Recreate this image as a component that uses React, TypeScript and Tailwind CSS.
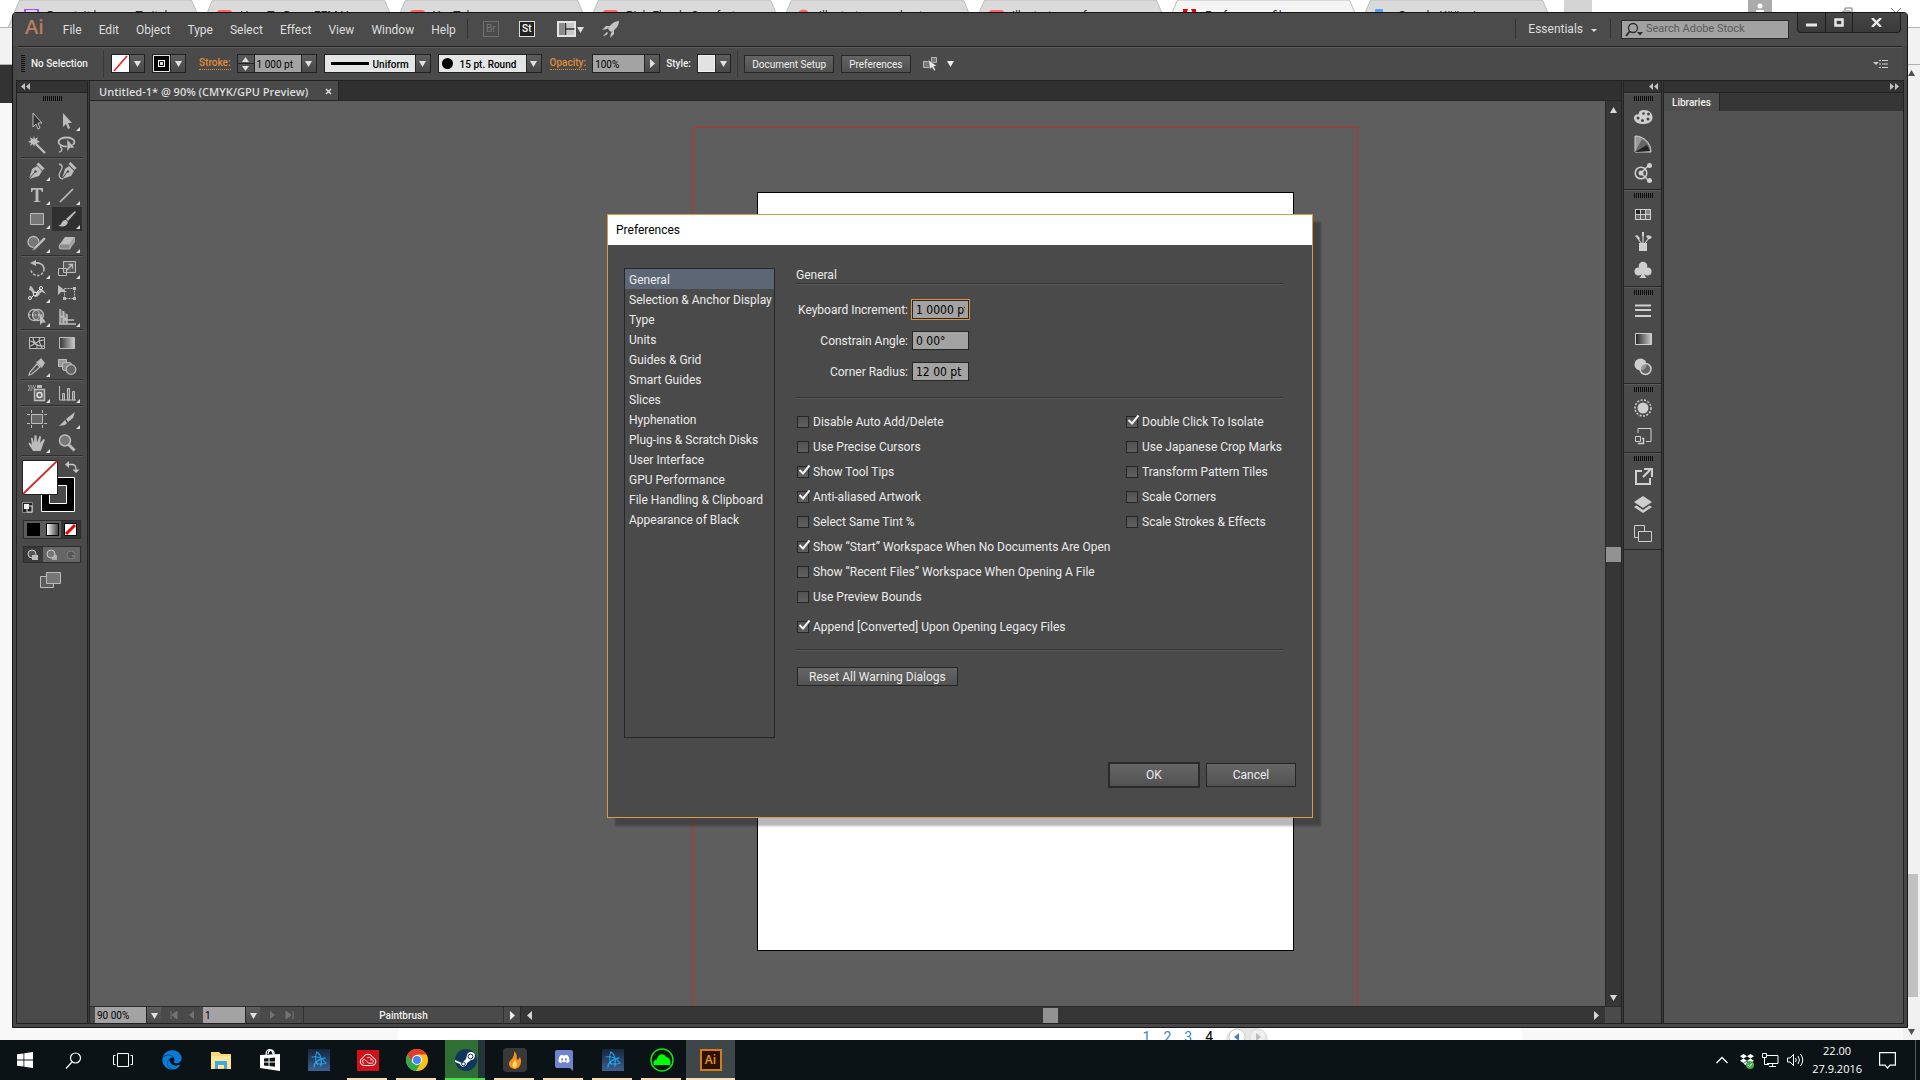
import { useState } from "react";
import type { ReactNode } from "react";
import clsx from "clsx";
import { FaDiscord, FaDropbox, FaEdge } from "react-icons/fa";

const menus = ["File", "Edit", "Object", "Type", "Select", "Effect", "View", "Window", "Help"];

const sections = [
  "General",
  "Selection & Anchor Display",
  "Type",
  "Units",
  "Guides & Grid",
  "Smart Guides",
  "Slices",
  "Hyphenation",
  "Plug-ins & Scratch Disks",
  "User Interface",
  "GPU Performance",
  "File Handling & Clipboard",
  "Appearance of Black",
];

const leftOptions = [
  { label: "Disable Auto Add/Delete", on: false },
  { label: "Use Precise Cursors", on: false },
  { label: "Show Tool Tips", on: true },
  { label: "Anti-aliased Artwork", on: true },
  { label: "Select Same Tint %", on: false },
  { label: "Show “Start” Workspace When No Documents Are Open", on: true },
  { label: "Show “Recent Files” Workspace When Opening A File", on: false },
  { label: "Use Preview Bounds", on: false },
];

const rightOptions = [
  { label: "Double Click To Isolate", on: true },
  { label: "Use Japanese Crop Marks", on: false },
  { label: "Transform Pattern Tiles", on: false },
  { label: "Scale Corners", on: false },
  { label: "Scale Strokes & Effects", on: false },
];

const browserTabs = [
  { title: "Dvantvit.bonus - Twitch", color: "text-purple-500", kind: "twitch" },
  { title: "How To Draw FEMALE Sk", color: "text-red-400", kind: "play" },
  { title: "YouTube", color: "text-red-400", kind: "play" },
  { title: "Rich Florals Comfortabl", color: "text-red-400", kind: "play" },
  { title: "illustrator smudge tool set", color: "text-red-400", kind: "ring" },
  { title: "illustrator preference for", color: "text-red-400", kind: "play" },
  { title: "Preferences files ......", color: "text-red-600", kind: "adobe" },
  { title: "Google-Käännin", color: "text-blue-400", kind: "doc" },
];

/* ---------- small pieces ---------- */

function Svg({ w = 20, h = 20, children, className }: { w?: number; h?: number; children: ReactNode; className?: string }) {
  return (
    <svg width={w} height={h} viewBox={`0 0 ${w} ${h}`} fill="none" className={clsx("shrink-0", className)} aria-hidden>
      {children}
    </svg>
  );
}

function Triangle({ dir = "down", className }: { dir?: "down" | "up" | "left" | "right"; className?: string }) {
  const d = { down: "M1 2h7l-3.500 6z", up: "M1 7h7L4.500 1z", left: "M7 0v9L2 4.500z", right: "M2 0v9l5-4.500z" }[dir];
  return (
    <Svg w={9} h={9} className={className}>
      <path d={d} fill="currentColor" />
    </Svg>
  );
}

function Grip() {
  return (
    <Svg w={20} h={5}>
      <path d="M1.500 0v5M3.500 0v5M5.500 0v5M7.500 0v5M9.500 0v5M11.500 0v5M13.500 0v5M15.500 0v5M17.500 0v5M19.500 0v5" stroke="#0c0c0c" />
    </Svg>
  );
}

function Collapse({ right }: { right?: boolean }) {
  return (
    <Svg w={9} h={7}>
      <path
        d={right ? "M0 0v7l4-3.500zM5 0v7l4-3.500z" : "M4 0v7L0 3.500zM9 0v7L5 3.500z"}
        fill="#c4c4c4"
      />
    </Svg>
  );
}

function Divider() {
  return <div className="mx-1 h-[2px] border-t border-[#303030] bg-[#5a5a5a]" />;
}

function ArrowBox({ dir = "down" }: { dir?: "down" | "right" }) {
  return (
    <span className="pointer-events-none flex w-[15px] shrink-0 items-center justify-center border-l border-[#262626] bg-gradient-to-b from-[#5e5e5e] to-[#494949] text-[#e2e2e2]">
      <Triangle dir={dir} />
    </span>
  );
}

function Swatch({ label, children }: { label: string; children: ReactNode }) {
  return (
    <button aria-label={label} className="flex h-[19px] border border-[#222]">
      <span className="flex w-[17px] self-stretch overflow-hidden">{children}</span>
      <ArrowBox />
    </button>
  );
}

function BarButton({ children }: { children: ReactNode }) {
  return (
    <button className="h-[18px] border border-[#262626] bg-gradient-to-b from-[#646464] to-[#505050] px-[7px] leading-[18px] text-[#efefef]">
      {children}
    </button>
  );
}

/* ---------- browser behind the window ---------- */

function BrowserBackdrop() {
  return (
    <div className="absolute inset-0 flex flex-col bg-[#f8f8f8]" aria-hidden>
      <div className="flex h-7 shrink-0 items-start overflow-hidden border-b border-[#b4b4b4] bg-white pl-2">
        {browserTabs.map((t) => (
          <div key={t.title} className="relative h-7 w-[193px] shrink-0">
            <Svg w={197} h={28} className="absolute inset-0">
              <path
                d="M0 28L11 1q1-1 2-1h169q1 0 2 1l11 27"
                fill={t.kind === "adobe" ? "#f4f4f4" : "#dadada"}
                stroke="#bdbdbd"
              />
            </Svg>
            <div className="relative flex items-center gap-2 pt-2 pr-3 pl-4 text-xs leading-4 text-[#333]">
              <Svg w={15} h={15} className={t.color}>
                {t.kind === "play" && <rect y="1" width="15" height="11" rx="3" fill="currentColor" />}
                {t.kind === "ring" && <circle cx="7.500" cy="7" r="5" stroke="currentColor" strokeWidth="3" />}
                {t.kind === "twitch" && <path d="M1 0h13v10H1z" stroke="currentColor" strokeWidth="2" />}
                {t.kind === "adobe" && <path d="M1 0h5L1 13zM9 0h5v13z" fill="currentColor" />}
                {t.kind === "doc" && <rect width="8" height="13" rx="1" fill="currentColor" />}
              </Svg>
              <span className="flex-1 truncate">{t.title}</span>
              <Svg w={9} h={9}>
                <path d="M1 1l7 7M8 1L1 8" stroke="#666" />
              </Svg>
            </div>
          </div>
        ))}
        <div className="ml-3 h-4 w-7 shrink-0 rounded-b bg-[#d4d4d4]" />
        <div className="flex-1" />
        <Svg w={24} h={16} className="mr-[70px]">
          <path d="M0 0h24v16H0z" fill="#aaa" />
          <circle cx="12" cy="6" r="2.500" fill="#fff" />
          <path d="M8 14v-4h8v4z" fill="#fff" />
        </Svg>
        <Svg w={12} h={16} className="mr-9">
          <path d="M3 10V8h7v7M1 11h7v5H1z" stroke="#777" />
        </Svg>
        <Svg w={12} h={16} className="mr-[18px]">
          <path d="M1 8l10 10M11 8L1 18" stroke="#777" />
        </Svg>
      </div>
      <div className="h-[37px] shrink-0 border-b border-[#b0b0b0] bg-[#f2f2f2]" />
      <div className="relative flex flex-1">
        <div className="h-[38px] w-16 bg-[#333]" />
        <div className="flex-1" />
        <div className="flex w-[17px] flex-col items-end bg-[#f1f1f1] text-[#505050]">
          <Triangle dir="up" className="mt-1 mr-1" />
          <div className="flex-[80]" />
          <div className="mr-[2px] h-[123px] w-[15px] bg-[#c1c1c1]" />
          <div className="flex-[3]" />
          <Triangle className="mr-1 mb-1" />
        </div>
        <div className="absolute inset-x-[398px] bottom-0 flex h-3 items-start justify-end gap-[13px] overflow-hidden bg-white pr-[254px] text-sm leading-[18px] text-[#3c86c8]">
          <span>1</span>
          <span>2</span>
          <span>3</span>
          <span className="text-black">4</span>
          <Svg w={42} h={24} className="rounded-full bg-[#e6e6e6]">
            <circle cx="11" cy="9" r="8" fill="#fff" stroke="#ccc" />
            <circle cx="32" cy="9" r="8" fill="#eee" stroke="#ddd" />
            <path d="M13 5v8L8 9z" fill="#3c86c8" />
            <path d="M30 5v8l5-4z" fill="#bbb" />
          </Svg>
        </div>
      </div>
    </div>
  );
}

/* ---------- menu bar & control bar ---------- */

function MenuBar() {
  return (
    <header className="flex h-[33px] shrink-0 items-start bg-[#4b4b4b] pl-3 text-xs text-[#dedede]">
      <span className="mt-1 font-['Open_Sans',sans-serif] text-xl leading-5 font-semibold text-[#b67f5e]">Ai</span>
      <nav className="mt-2 ml-[19px] flex gap-[17px] leading-[18px]">
        {menus.map((m) => (
          <button key={m}>{m}</button>
        ))}
      </nav>
      <span className="mt-[6px] ml-[11px] h-5 w-px bg-[#333]" />
      <button className="mt-2 ml-[15px] size-4 border border-[#6e6e6e] text-center text-[10px] leading-3 text-[#757575]">Br</button>
      <button className="mt-2 ml-5 size-4 border border-[#ddd] bg-[#222] text-center text-[10px] leading-3 font-medium text-white">St</button>
      <button aria-label="Arrange documents" className="mt-2 ml-[22px] flex items-center">
        <Svg w={19} h={16}>
          <path d="M1 1h17v14H1z" fill="#c8c8c8" stroke="#e4e4e4" strokeWidth="2" />
          <path d="M8.500 2v12M8.500 8h9" stroke="#333" strokeWidth="1.500" />
          <path d="M2 2h5.500v12H2z" fill="#8a8a8a" />
        </Svg>
        <Triangle />
      </button>
      <button aria-label="GPU performance" className="mt-[7px] ml-4">
        <Svg w={19} h={19}>
          <path d="M18 1c-5 0-9 4-11 8l3 3c4-2 8-6 8-11zM6 9L1 10l4-4h4zM10 13l-1 5 4-4v-4zM6 12l-4 4c2 0 4-1 5-3z" fill="#c4c4c4" />
        </Svg>
      </button>
      <div className="flex-1" />
      <span className="mt-[6px] h-5 w-px bg-[#333]" />
      <button className="mt-[7px] ml-3 flex items-center gap-2 leading-[18px]">
        Essentials
        <Svg w={7} h={9}>
          <path d="M0 4h6L3 7z" fill="#ddd" />
        </Svg>
      </button>
      <span className="mt-[6px] ml-3 h-5 w-px bg-[#333]" />
      <label className="mt-[7px] ml-[10px] flex h-[19px] w-[168px] items-center border border-[#2a2a2a] bg-[#a2a2a2] pl-[3px]">
        <Svg w={19} h={15}>
          <circle cx="8" cy="6" r="4.500" stroke="#2c2c2c" strokeWidth="1.300" />
          <path d="M5 9l-4 5" stroke="#2c2c2c" strokeWidth="2" />
          <path d="M12 10h6l-3 3.500z" fill="#2c2c2c" />
        </Svg>
        <input
          aria-label="Search Adobe Stock"
          placeholder="Search Adobe Stock"
          className="ml-[2px] w-0 flex-1 bg-transparent text-[11px] outline-none placeholder:text-[#5a5a5a]"
        />
      </label>
      <div className="mr-[6px] ml-2 flex h-5 divide-x divide-[#1e1e1e] rounded-b border border-t-0 border-[#1e1e1e] bg-gradient-to-b from-[#454545] to-[#3a3a3a]">
        <button aria-label="Minimize" className="flex w-7 items-center justify-center">
          <Svg w={11} h={9}>
            <path d="M0 7h11" stroke="#e8e8e8" strokeWidth="3" />
          </Svg>
        </button>
        <button aria-label="Maximize" className="flex w-[27px] items-center justify-center">
          <Svg w={10} h={9}>
            <path d="M1.500 1.500h7v6h-7z" stroke="#e8e8e8" strokeWidth="2.500" />
          </Svg>
        </button>
        <button aria-label="Close" className="flex w-[47px] items-center justify-center">
          <Svg w={11} h={9}>
            <path d="M1 0l9 9M10 0L1 9" stroke="#e8e8e8" strokeWidth="2.400" />
          </Svg>
        </button>
      </div>
    </header>
  );
}

function ControlBar() {
  return (
    <div className="flex h-[35px] shrink-0 items-center border-t border-b border-[#222] bg-[#4a4a4a] pl-1 text-[10px] text-[#efefef] inset-shadow-[0_1px_0_#5c5c5c]">
      <Svg w={4} h={19}>
        <path d="M0 1.500h4M0 3.500h4M0 5.500h4M0 7.500h4M0 9.500h4M0 11.500h4M0 13.500h4M0 15.500h4M0 17.500h4" stroke="#111" />
      </Svg>
      <span className="ml-[6px] w-[72px] font-medium">No Selection</span>
      <span className="mr-[7px] h-7 w-px bg-[#393939]" />
      <div className="flex gap-[7px]">
        <Swatch label="Fill">
          <Svg w={17} h={17}>
            <path d="M0 0h17v17H0z" fill="#fff" />
            <path d="M2 16L15 1" stroke="#d22" strokeWidth="1.600" />
          </Svg>
        </Swatch>
        <Swatch label="Stroke color">
          <Svg w={17} h={17}>
            <path d="M.5.5h16v16H.5z" fill="#000" stroke="#e8e8e8" />
            <path d="M5 5h7v7H5z" fill="#fff" />
            <path d="M6.500 6.500h4v4h-4z" fill="#ddd" stroke="#000" />
          </Svg>
        </Swatch>
      </div>
      <a href="#stroke" className="ml-[13px] border-b border-dotted border-[#e08a3a] leading-3 font-medium text-[#e08a3a]">
        Stroke:
      </a>
      <div className="ml-[6px] flex h-[19px] border border-[#222]">
        <div className="flex w-4 flex-col text-[#ddd]">
          <button aria-label="Increase stroke" className="flex flex-1 items-center justify-center border-b border-[#222] bg-[#585858]">
            <Svg w={7} h={5}><path d="M0 5h7L3.500 0z" fill="currentColor" /></Svg>
          </button>
          <button aria-label="Decrease stroke" className="flex flex-1 items-center justify-center bg-[#505050]">
            <Svg w={7} h={5}><path d="M0 0h7L3.500 5z" fill="currentColor" /></Svg>
          </button>
        </div>
        <input aria-label="Stroke weight" defaultValue="1 000 pt" className="w-[47px] border-l border-[#222] bg-[#a3a3a3] px-[2px] pt-px text-[10px] text-black outline-none" />
        <ArrowBox />
      </div>
      <div className="ml-[7px] flex h-[19px] border border-[#222]">
        <label className="flex w-[90px] items-center bg-[#e4e6e6] pl-[6px] text-black">
          <span className="h-[3px] w-[38px] shrink-0 bg-black" />
          <select aria-label="Width profile" className="w-0 flex-1 appearance-none bg-transparent pt-px pl-1 text-[10px] font-medium outline-none">
            <option>Uniform</option>
          </select>
        </label>
        <ArrowBox />
      </div>
      <div className="ml-[7px] flex h-[19px] border border-[#222]">
        <label className="flex w-[87px] items-center bg-[#e4e6e6] pl-[3px] text-black">
          <span className="size-[11px] shrink-0 rounded-full bg-black" />
          <select aria-label="Brush" className="w-0 flex-1 appearance-none bg-transparent pt-px pl-[7px] text-[10px] font-medium outline-none">
            <option>15 pt. Round</option>
          </select>
        </label>
        <ArrowBox />
      </div>
      <a href="#opacity" className="ml-2 border-b border-dotted border-[#e08a3a] leading-3 font-medium text-[#e08a3a]">
        Opacity:
      </a>
      <div className="ml-[6px] flex h-[19px] border border-[#222]">
        <input aria-label="Opacity" defaultValue="100%" className="w-[51px] bg-[#a3a3a3] px-[2px] pt-px text-[10px] text-black outline-none" />
        <ArrowBox dir="right" />
      </div>
      <span className="mr-[6px] ml-[6px] w-[25px] font-medium">Style:</span>
      <Swatch label="Graphic style">
        <span className="w-full border border-[#f2f2f2] bg-[#e2e2e2]" />
      </Swatch>
      <span className="mx-[6px] h-7 w-px bg-[#393939]" />
      <div className="flex gap-[7px]">
        <BarButton>Document Setup</BarButton>
        <BarButton>Preferences</BarButton>
      </div>
      <button aria-label="Select similar" className="ml-[11px] flex items-center gap-[7px]">
        <Svg w={17} h={15}>
          <path d="M1.500 5.500h6v6h-6zM9.500 1.500h5v5h-5z" fill="#777" stroke="#b8b8b8" />
          <path d="M6 3.500l9 6.500-3.200.6 2 3.400-1.800 1-2-3.500-2 2z" fill="#e6e6e6" stroke="#444" strokeWidth=".6" />
        </Svg>
        <Triangle />
      </button>
      <div className="flex-1" />
      <button aria-label="Panel menu" className="mr-[15px]">
        <Svg w={15} h={10}>
          <path d="M0 3h6L3 6z" fill="#ccc" />
          <path d="M6 1.500h2M9 1.500h6M6 5h2M9 5h6M6 8.500h2M9 8.500h6" stroke="#ccc" strokeWidth="1.200" />
        </Svg>
      </button>
    </div>
  );
}

/* ---------- toolbox ---------- */

const S = "#bcbcbc";

const toolGroups: { name: string; fly?: boolean; art: ReactNode }[][] = [
  [
    { name: "Selection", art: <path d="M6 2v14l3-3 2 5 2-1-2-5h4z" fill="#333" stroke={S} /> },
    { name: "Direct Selection", fly: true, art: <path d="M6 2v14l3-3 2 5 2-1-2-5h4z" fill={S} /> },
    {
      name: "Magic Wand",
      art: (
        <>
          <path d="M9 9l9 9" stroke={S} strokeWidth="2.200" />
          <path d="M7 1l1 3 3-2-1 3 3 2-3 1 1 3-3-2-1 3-1-3-3 2 1-3-3-1 3-2-1-3 3 2z" fill={S} />
        </>
      ),
    },
    {
      name: "Lasso",
      art: (
        <>
          <ellipse cx="9.500" cy="7" rx="8" ry="4.500" stroke={S} strokeWidth="1.800" />
          <path d="M5 10c-2 1-2 3 0 3M5 13c0 2-1 4-3 4" stroke={S} strokeWidth="1.300" />
          <path d="M10 4v13l3-4h5z" fill={S} stroke="#444" strokeWidth=".6" />
        </>
      ),
    },
  ],
  [
    {
      name: "Pen",
      fly: true,
      art: (
        <>
          <path d="M2 18L5 8l5-3 5 5-3 5z" fill={S} />
          <path d="M2 18l6-7" stroke="#4a4a4a" />
          <circle cx="8.500" cy="10.500" r="1.200" fill="#4a4a4a" />
          <path d="M10.500 2.500l6 6" stroke={S} strokeWidth="3" />
        </>
      ),
    },
    {
      name: "Curvature",
      art: (
        <>
          <path d="M5 18l3-10 4-3 5 5-3 5z" fill={S} />
          <path d="M5 18l5-7" stroke="#4a4a4a" />
          <circle cx="11" cy="10.500" r="1.200" fill="#4a4a4a" />
          <path d="M12.500 2l6 6" stroke={S} strokeWidth="3" />
          <path d="M2 3c5 1 3 5 1 8-2 4 0 7 3 7" stroke={S} strokeWidth="1.300" />
        </>
      ),
    },
    { name: "Type", fly: true, art: <path d="M4 3h12v4h-1.200c-.3-2-.8-2.600-3.400-2.600V15c0 1 .5 1.200 2 1.300V17H6.600v-.7c1.500-.1 2-.3 2-1.300V4.400C6 4.400 5.500 5 5.200 7H4z" fill={S} /> },
    { name: "Line Segment", fly: true, art: <path d="M3 17L16 4" stroke={S} strokeWidth="1.700" /> },
    { name: "Rectangle", fly: true, art: <path d="M3.500 4.500h13v11h-13z" fill="#777" stroke={S} /> },
    {
      name: "Paintbrush",
      fly: true,
      art: (
        <>
          <path d="M18 2L9 10l2 2 8-9z" fill={S} />
          <path d="M9 11c-3 0-4 2-5 4-.6 1-2 1.500-3 1.500 4 2 9 1 10-3.500z" fill={S} />
        </>
      ),
    },
    {
      name: "Pencil",
      fly: true,
      art: (
        <>
          <circle cx="6.500" cy="9" r="5.500" fill="#777" stroke={S} strokeWidth="1.300" />
          <path d="M19 6L9 16l-4 2 2-4L17 4z" fill={S} stroke="#444" strokeWidth=".5" />
        </>
      ),
    },
    {
      name: "Eraser",
      fly: true,
      art: (
        <>
          <path d="M8 4h10l-5 7H3z" fill={S} />
          <path d="M3 11h10v5H4q-2 0-2-2z" fill="#8c8c8c" stroke={S} strokeWidth=".8" />
          <path d="M13 11l5-7v5l-5 7z" fill="#a4a4a4" />
        </>
      ),
    },
  ],
  [
    {
      name: "Rotate",
      fly: true,
      art: (
        <>
          <path d="M7 4c6-1 10 2 10 6" stroke={S} strokeWidth="1.700" />
          <path d="M17 10a6.500 6.500 0 0 1-13 0" stroke={S} strokeWidth="1.500" strokeDasharray="2.500 1.500" />
          <path d="M3 4l6-3v6z" fill={S} />
        </>
      ),
    },
    {
      name: "Scale",
      fly: true,
      art: (
        <>
          <path d="M6.500 2.500h12v11h-12z" fill="#5c5c5c" stroke={S} />
          <path d="M1.500 9.500h8v7h-8z" stroke={S} />
          <path d="M10 11l5-5M11.500 5.500h4v4" stroke={S} strokeWidth="1.300" />
        </>
      ),
    },
    {
      name: "Width",
      fly: true,
      art: (
        <>
          <path d="M3 3c4 0 3 7 7 6s4-6 9 2l-4-2c-2 0-3 5-6 5S6 7 2 7z" fill={S} />
          <path d="M3 16l11-11" stroke="#eee" />
          <circle cx="3" cy="15" r="1.500" fill="#444" stroke="#eee" />
          <circle cx="8" cy="11" r="1.800" fill="#444" stroke="#eee" />
          <circle cx="14" cy="5" r="1.500" fill="#444" stroke="#eee" />
        </>
      ),
    },
    {
      name: "Free Transform",
      art: (
        <>
          <path d="M7.500 5.500h10v10h-10z" stroke={S} strokeDasharray="2 1" />
          <path d="M6 14h3v3H6zM16 14h3v3h-3zM16 4h3v3h-3z" fill={S} />
          <path d="M1 2v10l3-3h6z" fill={S} />
        </>
      ),
    },
    {
      name: "Shape Builder",
      fly: true,
      art: (
        <>
          <circle cx="7" cy="8" r="5.500" stroke={S} strokeWidth="1.300" />
          <circle cx="11" cy="8" r="5.500" fill="#8888" stroke={S} strokeWidth="1.300" />
          <path d="M2 8h13" stroke="#eee" strokeDasharray="1.500 1.500" />
          <path d="M13 7v11l2.500-2.500H19z" fill={S} />
        </>
      ),
    },
    {
      name: "Perspective Grid",
      fly: true,
      art: (
        <>
          <path d="M3 2v15M6.500 4v13M10 7v10M2 17h17M6 13h11M3 9l7 3" stroke={S} strokeWidth="1.500" />
          <path d="M3 2l7 5v10H3z" fill="#bbb8" />
        </>
      ),
    },
  ],
  [
    {
      name: "Mesh",
      art: (
        <>
          <path d="M2.500 4.500h15v11h-15z" fill="#3c3c3c" stroke={S} />
          <path d="M3 8c5 0 4 6 14 5M6 5c0 5 5 5 4 10M13 5c-3 3 1 6 2 10M3 13c4 0 6-6 14-6" stroke={S} strokeWidth="1.200" />
        </>
      ),
    },
    {
      name: "Gradient",
      art: (
        <>
          <defs>
            <linearGradient id="tool-grad"><stop stopColor="#333" /><stop offset="1" stopColor="#ccc" /></linearGradient>
          </defs>
          <path d="M2.500 4.500h15v11h-15z" fill="url(#tool-grad)" stroke={S} />
        </>
      ),
    },
    {
      name: "Eyedropper",
      fly: true,
      art: (
        <>
          <path d="M10 7l3 3-8 7-3 1 1-3z" stroke={S} strokeWidth="1.200" />
          <path d="M9 5l6 6 1-2 2-3-4-5-3 3z" fill={S} />
        </>
      ),
    },
    {
      name: "Blend",
      art: (
        <>
          <path d="M1.500 2.500h8v7h-8z" fill="#999" stroke={S} />
          <rect x="5.500" y="5.500" width="9" height="8" rx="2" fill="#888" stroke={S} />
          <circle cx="14" cy="12.500" r="4.800" fill="#666" stroke={S} strokeWidth="1.300" />
        </>
      ),
    },
  ],
  [
    {
      name: "Symbol Sprayer",
      fly: true,
      art: (
        <>
          <path d="M1 3h8M2 5h7M1 7h5" stroke={S} strokeWidth="1.300" strokeDasharray="1.200 1.200" />
          <path d="M10 2h5v3h-5z" fill={S} />
          <path d="M7.500 6.500h10v11h-10z" fill="#666" stroke={S} strokeWidth="1.400" />
          <circle cx="12.500" cy="12" r="2.500" stroke="#ddd" strokeWidth="1.500" />
        </>
      ),
    },
    {
      name: "Column Graph",
      fly: true,
      art: (
        <>
          <path d="M2.500 3v14H19" stroke={S} />
          <path d="M5.500 10.500h2V17h-2zM10.500 5.500h2V17h-2zM15.500 8.500h2V17h-2z" fill="#777" stroke={S} />
        </>
      ),
    },
  ],
  [
    {
      name: "Artboard",
      art: (
        <>
          <path d="M4.500 5.500h11v9h-11z" fill="#666" stroke={S} />
          <path d="M0 5.500h3M17 5.500h3M0 14.500h3M17 14.500h3M4.500 1v3M15.500 1v3M4.500 16v3M15.500 16v3" stroke={S} />
        </>
      ),
    },
    {
      name: "Slice",
      fly: true,
      art: <path d="M18 3l-9 7 2 3 5-4zM8 11l-6 6 6-1 2-2z" fill={S} />,
    },
    {
      name: "Hand",
      fly: true,
      art: <path d="M6 18c-1-3-4-5-4.500-8 1.500-.8 2.500 1 3.500 2L4 5c1.500-1 2 0 3 5l.5-7.500c1.500-.8 2 0 2 0L10 9.500l2.500-6.500c1.500 0 1.500 1 1.500 1l-1 6 3.500-4c1.500 0 1.500 1 1 2-2 3-2 7-4 10z" fill={S} />,
    },
    {
      name: "Zoom",
      art: (
        <>
          <path d="M11 11l6.500 6.500" stroke={S} strokeWidth="3" />
          <circle cx="8" cy="7.500" r="5.500" fill="#777" stroke={S} strokeWidth="1.500" />
        </>
      ),
    },
  ],
];

function Toolbox() {
  return (
    <aside className="flex w-[70px] shrink-0 flex-col bg-[#4a4a4a] ring-1 ring-[#222]">
      <div className="flex h-3 items-center border-b border-[#222] bg-[#333] pl-1">
        <Collapse />
      </div>
      <div className="flex h-4 items-start justify-center pt-[3px]">
        <Grip />
      </div>
      {toolGroups.map((group, i) => (
        <div key={i}>
          <div className="grid grid-cols-2 px-[5px]">
            {group.map((t) => (
              <button
                key={t.name}
                aria-label={t.name}
                className={clsx(
                  "relative flex h-6 items-center justify-center",
                  t.name === "Paintbrush" && "bg-[#303030]"
                )}
              >
                <Svg>{t.art}</Svg>
                {t.fly && (
                  <Svg w={4} h={4} className="absolute right-[2px] bottom-[2px]">
                    <path d="M4 0v4H0z" fill="#ddd" />
                  </Svg>
                )}
              </button>
            ))}
          </div>
          <Divider />
        </div>
      ))}
      <div className="flex h-[63px] justify-center pt-px">
        <svg width="62" height="60" viewBox="0 0 62 60" fill="none" aria-hidden>
          <path d="M20.500 19.500h33v34h-33z" fill="#000" stroke="#fff" />
          <path d="M28.500 27.500h17v18h-17z" fill="#4a4a4a" stroke="#fff" />
          <path d="M1.500 2.500h35v34h-35z" fill="#fff" stroke="#222" />
          <path d="M2 36L36 3" stroke="#c8322c" strokeWidth="1.800" />
          <path d="M47 6.500h4q4 0 4 5" stroke="#c4c4c4" strokeWidth="1.300" />
          <path d="M44 6.500l4-3.500v7zM55 15l-3.500-3.500h7z" fill="#c4c4c4" />
          <path d="M1.500 44.500h10v10h-10z" fill="#222" stroke="#888" />
          <path d="M6 48h5v6H6z" stroke="#ddd" />
          <path d="M3 46h5v5H3z" fill="#eee" />
        </svg>
      </div>
      <div className="mx-[6px] flex h-[19px] border border-[#2c2c2c] bg-[#5c5c5c]">
        <button aria-label="Color" className="flex flex-1 items-center justify-center">
          <span className="size-[13px] bg-black" />
        </button>
        <button aria-label="Gradient fill" className="flex flex-1 items-center justify-center">
          <span className="size-[13px] border border-black bg-gradient-to-r from-white to-[#444]" />
        </button>
        <button aria-label="None" className="flex flex-1 items-center justify-center bg-[#333]">
          <Svg w={13} h={13}>
            <path d="M.5.5h12v12H.5z" fill="#fff" stroke="#000" />
            <path d="M2 11l9-9" stroke="#e00" strokeWidth="3" />
          </Svg>
        </button>
      </div>
      <div className="mx-[6px] mt-[7px] flex h-[17px] border border-[#2c2c2c] bg-[#666]">
        <button aria-label="Draw normal" className="flex flex-1 items-center justify-center bg-[#3a3a3a]">
          <Svg w={12} h={12}>
            <circle cx="5" cy="5" r="4" fill="#555" stroke="#ccc" />
            <path d="M5 6h6v5H5z" fill="#bbb" />
          </Svg>
        </button>
        <button aria-label="Draw behind" className="flex flex-1 items-center justify-center">
          <Svg w={12} h={12}>
            <path d="M6 6h5v5H6z" fill="#aaa" />
            <circle cx="5" cy="5" r="4" fill="#777" stroke="#ccc" />
          </Svg>
        </button>
        <button aria-label="Draw inside" className="flex flex-1 items-center justify-center">
          <Svg w={12} h={12}>
            <circle cx="6" cy="6" r="4" fill="#555" stroke="#808080" />
            <path d="M6 6h4v4z" fill="#777" />
          </Svg>
        </button>
      </div>
      <button aria-label="Screen mode" className="mt-2 mr-1 flex justify-center">
        <Svg w={22} h={18}>
          <path d="M1.500 5.500h13v11h-13z" fill="#5c5c5c" stroke={S} />
          <path d="M7.500 1.500h14v11h-14z" fill="#777" stroke={S} />
        </Svg>
      </button>
    </aside>
  );
}

/* ---------- document ---------- */

function DocumentArea() {
  return (
    <section className="flex min-w-0 flex-1 flex-col ring-1 ring-[#222]">
      <div className="flex h-5 shrink-0 items-stretch border-b border-[#262626] bg-[#303030]">
        <div className="flex w-[249px] items-center justify-between border-r border-[#262626] bg-[#4a4a4a] px-[9px] pt-[2px] font-['Open_Sans',sans-serif] text-[11px] leading-4 font-semibold text-[#dcdcdc]">
          <span>Untitled-1* @ 90% (CMYK/GPU Preview)</span>
          <button aria-label="Close document" className="mr-[-3px]">
            <Svg w={7} h={7}>
              <path d="M1 1l5 5M6 1L1 6" stroke="#ddd" strokeWidth="1.500" />
            </Svg>
          </button>
        </div>
      </div>
      <div className="flex min-h-0 flex-1">
        <div className="relative flex-1 overflow-hidden bg-[#5e5e5e]">
          <div className="absolute top-[26px] -bottom-1 left-[602px] w-[666px] border border-[#c03030]" />
          <div className="absolute top-[91px] left-[667px] h-[759px] w-[537px] border border-black bg-white" />
        </div>
        <div className="flex w-4 flex-col items-center border-l border-[#2a2a2a] bg-[#363636] text-[#d8d8d8]">
          <Triangle dir="up" className="mt-[5px]" />
          <div className="flex-1" />
          <div className="h-[15px] w-[15px] bg-[#929292]" />
          <div className="flex-1" />
          <Triangle className="mb-1" />
        </div>
      </div>
      <div className="flex h-[17px] shrink-0 items-stretch border-t border-[#2a2a2a] bg-[#4a4a4a] pl-[5px] text-[10px] text-[#eee]">
        <input aria-label="Zoom" defaultValue="90 00%" className="w-[51px] bg-[#a3a3a3] px-[2px] pt-px text-black outline-none" />
        <ArrowBox />
        <div className="flex w-[42px] items-center justify-center gap-[11px] text-[#747474]">
          <button aria-label="First artboard"><Svg w={8} h={8}><path d="M1 0v8M7 0v8L2 4z" fill="currentColor" stroke="currentColor" /></Svg></button>
          <button aria-label="Previous artboard"><Svg w={6} h={8}><path d="M5 0v8L0 4z" fill="currentColor" /></Svg></button>
        </div>
        <input aria-label="Artboard" defaultValue="1" className="w-[42px] bg-[#a3a3a3] px-[2px] pt-px text-black outline-none" />
        <ArrowBox />
        <div className="flex w-[43px] items-center justify-center gap-[9px] text-[#747474]">
          <button aria-label="Next artboard"><Svg w={6} h={8}><path d="M0 0v8l5-4z" fill="currentColor" /></Svg></button>
          <button aria-label="Last artboard"><Svg w={9} h={8}><path d="M8 0v8M1 0v8l5-4z" fill="currentColor" stroke="currentColor" /></Svg></button>
        </div>
        <div className="flex w-[200px] items-center justify-center border-l border-[#333] pt-px font-medium">Paintbrush</div>
        <button aria-label="Status options" className="flex w-[17px] items-center justify-center border-l border-[#333]">
          <Triangle dir="right" />
        </button>
        <div className="flex flex-1 items-center border-l border-[#2a2a2a] bg-[#363636] px-1 text-[#d8d8d8]">
          <Triangle dir="left" />
          <div className="flex-[508]" />
          <div className="h-[15px] w-[15px] bg-[#929292]" />
          <div className="flex-[533]" />
          <Triangle dir="right" />
        </div>
        <div className="w-4" />
      </div>
    </section>
  );
}

/* ---------- right dock ---------- */

const L = "#cfcfcf";

const dockGroups: { name: string; art: ReactNode }[][] = [
  [
    {
      name: "Color",
      art: (
        <>
          <path d="M1 11c0-2 1.500-3.500 3-3.500 1.500 0 2-.5 2-2C6 4 8 3 11 3c5 0 8.500 3 8.500 7.500C19.500 15 15 17 10 17c-4 0-9-1.500-9-6z" fill={L} />
          <circle cx="5" cy="11" r="1.500" fill="#444" /><circle cx="9.500" cy="13.500" r="1.500" fill="#444" />
          <circle cx="15.500" cy="7" r="1.500" fill="#444" /><circle cx="15" cy="12" r="1.500" fill="#444" />
          <circle cx="10.500" cy="6.500" r="1.300" fill="#444" />
        </>
      ),
    },
    {
      name: "Color Guide",
      art: (
        <>
          <path d="M2 1c9 0 16 7 16 16H2z" fill="#999" stroke={L} />
          <path d="M2 17L9 4c5 3 8 7 8 12z" fill="#666" />
          <path d="M2 17l12-7 3 6z" fill="#222" />
        </>
      ),
    },
    {
      name: "Color Themes",
      art: (
        <>
          <circle cx="8" cy="10" r="5.800" stroke={L} strokeWidth="1.500" />
          <circle cx="8" cy="10" r="2.500" fill={L} />
          <path d="M8 10l8-8M8 10l8 8" stroke={L} strokeWidth="1.400" />
          <circle cx="16.500" cy="2.500" r="2.500" fill={L} /><circle cx="16.500" cy="17.500" r="2.500" fill={L} />
        </>
      ),
    },
  ],
  [
    {
      name: "Swatches",
      art: (
        <>
          <path d="M2 5h16v11H2z" fill={L} />
          <path d="M3 6h4v4H3z" fill="#222" /><path d="M8 6h4v4H8z" fill="#444" /><path d="M13 6h4v4h-4z" fill="#888" />
          <path d="M3 11h4v4H3zM8 11h4v4H8zM13 11h4v4h-4z" fill="#666" />
        </>
      ),
    },
    {
      name: "Brushes",
      art: (
        <>
          <path d="M6 11h8v8H6z" fill={L} />
          <path d="M8 11L4 5M10 11V2M12 11l4-5" stroke={L} strokeWidth="1.200" />
          <path d="M2 4l2-1 3 3-1 2zM9 0h2v4H9zM13 4q3-2 6 1-2 3-4 2z" fill={L} />
        </>
      ),
    },
    {
      name: "Symbols",
      art: (
        <>
          <circle cx="10" cy="6" r="4.300" fill={L} /><circle cx="5.500" cy="11.500" r="4" fill={L} /><circle cx="14.500" cy="11.500" r="4" fill={L} />
          <path d="M9 10h2c0 5 1 7 3 8H6c2-1 3-3 3-8z" fill={L} />
        </>
      ),
    },
  ],
  [
    { name: "Stroke", art: <path d="M2 4.500h16M2 9h16M2 15h16" stroke={L} strokeWidth="2" /> },
    {
      name: "Gradient",
      art: (
        <>
          <defs>
            <linearGradient id="dock-grad"><stop stopColor="#222" /><stop offset="1" stopColor="#ccc" /></linearGradient>
          </defs>
          <path d="M2.500 4.500h16v11h-16z" fill="url(#dock-grad)" stroke={L} />
        </>
      ),
    },
    {
      name: "Transparency",
      art: (
        <>
          <circle cx="7.500" cy="7.500" r="6" fill={L} />
          <circle cx="12.500" cy="12" r="5.500" fill="#7779" stroke={L} strokeWidth="1.500" />
        </>
      ),
    },
  ],
  [
    {
      name: "Appearance",
      art: (
        <>
          <circle cx="10" cy="10" r="5.500" fill={L} />
          <circle cx="10" cy="10" r="8" stroke={L} strokeWidth="1.500" strokeDasharray="2 1.500" />
        </>
      ),
    },
    {
      name: "Graphic Styles",
      art: (
        <>
          <path d="M5 7V2.500h13v13h-5" stroke={L} />
          <path d="M2.500 10.500h5v5h-5z" stroke={L} />
          <path d="M9 12.500h1.500v5h-5V17" stroke={L} strokeWidth="1.500" />
        </>
      ),
    },
  ],
  [
    {
      name: "Asset Export",
      art: (
        <>
          <path d="M9 4H3v13h14v-6" stroke={L} strokeWidth="2" />
          <path d="M10 10l7-7M11 2h8v8" stroke={L} strokeWidth="2.200" />
        </>
      ),
    },
    {
      name: "Layers",
      art: (
        <>
          <path d="M10 1l9 6-9 6-9-6z" fill={L} />
          <path d="M1 12l2.500-1.500L10 15l6.500-4.500L19 12l-9 6z" fill={L} />
        </>
      ),
    },
    {
      name: "Artboards",
      art: (
        <>
          <path d="M1.500 2.500h10v12h-10z" stroke={L} />
          <path d="M5.500 8.500h13v10h-13z" fill="#4a4a4a" stroke={L} />
        </>
      ),
    },
  ],
];

function Dock() {
  return (
    <aside className="flex w-[37px] shrink-0 flex-col bg-[#4a4a4a] ring-1 ring-[#222]">
      <div className="flex h-3 items-center justify-end border-b border-[#222] bg-[#333] pr-[3px]">
        <Collapse />
      </div>
      {dockGroups.map((group, i) => (
        <div key={i} className="flex flex-col items-center border-b border-[#262626] pt-[3px] inset-shadow-[0_1px_0_#5a5a5a]">
          <Grip />
          <div className="flex flex-col pt-[2px] pb-[2px]">
            {group.map((p) => (
              <button key={p.name} aria-label={p.name} className="flex h-7 items-center justify-center">
                <Svg>{p.art}</Svg>
              </button>
            ))}
          </div>
        </div>
      ))}
    </aside>
  );
}

function Libraries() {
  return (
    <aside className="flex w-[239px] shrink-0 flex-col bg-[#535353] ring-1 ring-[#222]">
      <div className="flex h-3 items-center justify-end border-b border-[#222] bg-[#333] pr-1">
        <Collapse right />
      </div>
      <div className="flex h-[18px] bg-[#363636] text-[10px]">
        <button className="border-r border-[#262626] bg-[#4e4e4e] px-2 font-medium text-[#f0f0f0]">Libraries</button>
      </div>
    </aside>
  );
}

/* ---------- preferences dialog ---------- */

function Check({ label, on }: { label: string; on: boolean }) {
  const [checked, setChecked] = useState(on);
  return (
    <label className="flex h-[25px] items-center">
      <span className="relative flex">
        <input
          type="checkbox"
          checked={checked}
          onChange={() => setChecked(!checked)}
          className="peer size-3 appearance-none border border-[#262626] bg-gradient-to-b from-[#525252] to-[#606060]"
        />
        <Svg w={14} h={13} className="pointer-events-none absolute -top-[2px] left-0 hidden peer-checked:block">
          <path d="M2.500 6l3.500 3.500L12.500 1.500" stroke="#f2f2f2" strokeWidth="2" />
        </Svg>
      </span>
      <span className="ml-1">{label}</span>
    </label>
  );
}

function Rule() {
  return <div className="h-[2px] border-t border-[#363636] bg-[#585858]" />;
}

function Field({ label, value, focused }: { label: string; value: string; focused?: boolean }) {
  return (
    <label className="flex h-[31px] items-center gap-1">
      <span className="w-28 text-right">{label}</span>
      <input
        defaultValue={value}
        className={clsx(
          "h-[19px] w-[57px] border border-[#262626] bg-[#a3a3a3] px-[3px] font-['DejaVu_Sans_Condensed',sans-serif] text-xs text-black outline-none",
          focused && "ring-1 ring-[#dc9440]"
        )}
      />
    </label>
  );
}

function PreferencesDialog() {
  const [section, setSection] = useState("General");
  return (
    <div
      role="dialog"
      aria-label="Preferences"
      className="absolute top-[214px] left-[607px] w-[706px] border border-[#d89c4c] bg-[#4a4a4a] text-xs text-[#ebebeb] shadow-[8px_8px_2px_rgba(0,0,0,0.28)]"
    >
      <div className="flex h-[30px] items-center bg-white px-2 text-black">Preferences</div>
      <div className="flex gap-[21px] pt-[23px] pr-[29px] pl-4">
        <ul className="h-[470px] w-[151px] shrink-0 border border-[#262626]">
          {sections.map((s) => (
            <li key={s}>
              <button
                onClick={() => setSection(s)}
                className={clsx(
                  "block h-5 w-full pl-1 text-left leading-[22px] whitespace-nowrap",
                  s === section && "bg-[#5d6675]"
                )}
              >
                {s}
              </button>
            </li>
          ))}
        </ul>
        <div className="flex-1">
          <h2 className="h-[15px] leading-[14px]">General</h2>
          <Rule />
          <div className="mt-[9px] flex flex-col">
            <Field label="Keyboard Increment:" value="1 0000 pt" focused />
            <Field label="Constrain Angle:" value="0 00°" />
            <Field label="Corner Radius:" value="12 00 pt" />
          </div>
          <div className="mt-[10px]">
            <Rule />
          </div>
          <div className="mt-[10px] flex justify-between pl-px">
            <div>
              {leftOptions.map((o) => (
                <Check key={o.label} {...o} />
              ))}
              <div className="mt-[5px]">
                <Check label="Append [Converted] Upon Opening Legacy Files" on />
              </div>
            </div>
            <div className="w-[157px]">
              {rightOptions.map((o) => (
                <Check key={o.label} {...o} />
              ))}
            </div>
          </div>
          <div className="mt-[10px]">
            <Rule />
          </div>
          <button className="mt-4 ml-px h-[19px] border border-[#262626] bg-gradient-to-b from-[#666] to-[#525252] px-[11px] leading-4">
            Reset All Warning Dialogs
          </button>
        </div>
      </div>
      <div className="flex items-center justify-end gap-[6px] pt-6 pr-4 pb-[29px]">
        <button className="h-[26px] w-[92px] border-2 border-[#2a2a2a] bg-gradient-to-b from-[#666] to-[#525252]">OK</button>
        <button className="h-6 w-[90px] border border-[#262626] bg-gradient-to-b from-[#666] to-[#525252]">Cancel</button>
      </div>
    </div>
  );
}

/* ---------- taskbar ---------- */

function BattleNet() {
  return (
    <Svg w={22} h={22}>
      <defs>
        <linearGradient id="bnet" x2="0" y2="1"><stop stopColor="#16263c" /><stop offset="1" stopColor="#3d5f92" /></linearGradient>
      </defs>
      <path d="M0 0h22v22H0z" fill="url(#bnet)" />
      <path d="M9 3c3 2 5 7 4 14" stroke="#1c9be0" strokeWidth="1.500" strokeLinecap="round" />
      <path d="M4 8c5-1 11 1 14 6" stroke="#1c9be0" strokeWidth="1.200" strokeLinecap="round" />
      <path d="M6 18c0-4 4-8 11-9" stroke="#1c9be0" strokeWidth="1.500" strokeLinecap="round" />
      <path d="M9 3c-2 4-2 10 1 13M18 14c-4 2-9 1-11-1" stroke="#38b6f0" strokeWidth=".8" />
    </Svg>
  );
}

const tasks: { name: string; state?: "open" | "steam" | "active"; art: ReactNode }[] = [
  {
    name: "Start",
    art: (
      <Svg w={16} h={16}>
        <path d="M0 2.300L6.500 1.400v6.200H0zM7.300 1.300L16 0v7.600H7.300zM0 8.400h6.500v6.200L0 13.700zM7.300 8.400H16V16l-8.700-1.300z" fill="#fff" />
      </Svg>
    ),
  },
  {
    name: "Search",
    art: (
      <Svg w={17} h={17}>
        <circle cx="10.500" cy="6" r="5" stroke="#fff" strokeWidth="1.200" />
        <path d="M7 10l-6 6.500" stroke="#fff" strokeWidth="1.200" />
      </Svg>
    ),
  },
  {
    name: "Task View",
    art: (
      <Svg w={20} h={16}>
        <path d="M4.500 1.500h11v13h-11zM2.500 3.500h-2v9h2M17.500 3.500h2v9h-2" stroke="#fff" />
      </Svg>
    ),
  },
  { name: "Edge", art: <FaEdge size={20} color="#0a7bd8" /> },
  {
    name: "File Explorer",
    art: (
      <Svg w={22} h={20}>
        <path d="M1 2h8l2 2h10v15H1z" fill="#f8d775" />
        <path d="M1 6h20v12H1z" fill="#fbe59a" />
        <path d="M5 19v-8h12v8h-3v-4H8v4z" fill="#3fa9dc" />
      </Svg>
    ),
  },
  {
    name: "Store",
    art: (
      <Svg w={22} h={24}>
        <path d="M7 7c0-7 6-7 7-1M9 6c1-6 7-5 6 1" stroke="#fff" strokeWidth="1.200" />
        <path d="M1 7l20-1v17L1 20z" fill="#fff" />
        <path d="M5 10.500l4.500-.5v3.500H5zM10.500 10l5.500-.5v4h-5.500zM5 14.500h4.500V18L5 17.500zM10.500 14.500H16v4.200l-5.500-.6z" fill="#0b1418" />
      </Svg>
    ),
  },
  { name: "Battle.net", art: <BattleNet /> },
  {
    name: "Creative Cloud",
    state: "open",
    art: (
      <Svg w={22} h={21}>
        <path d="M0 0h22v21H0z" fill="#d0111a" />
        <path d="M7 15.500h8a4 4 0 0 0 .8-7.900A5.200 5.200 0 0 0 6 7.700a4 4 0 0 0 1 7.800z" stroke="#fff" strokeWidth="1" />
        <path d="M7.200 13.200a1.800 1.800 0 1 1 1.300-3l3 3h3a1.800 1.800 0 1 0-1.300-3M10 8c2-1.600 4.500 0 4.500 2" stroke="#fff" strokeWidth=".9" />
      </Svg>
    ),
  },
  {
    name: "Chrome",
    state: "open",
    art: (
      <Svg w={22} h={22}>
        <circle cx="11" cy="11" r="11" fill="#fbc116" />
        <path d="M1.500 5.500A11 11 0 0 1 20.500 5.500H11L6 13z" fill="#e33b2e" />
        <path d="M1.500 5.500A11 11 0 0 0 10 22l5-8.500L6.200 13.700z" fill="#2da94f" />
        <circle cx="11" cy="11" r="5" fill="#fff" />
        <circle cx="11" cy="11" r="4" fill="#4286f5" />
      </Svg>
    ),
  },
  {
    name: "Steam",
    state: "steam",
    art: (
      <Svg w={22} h={22}>
        <circle cx="11" cy="11" r="11" fill="#12365e" />
        <path d="M0 11l7 3 4-4 1-4a4 4 0 1 1 4 5l-4 3c0 4-6 5-7 1L0 13z" fill="#fff" />
        <circle cx="15.500" cy="7.500" r="2.400" fill="#fff" stroke="#12365e" />
        <circle cx="8.500" cy="15" r="1.800" stroke="#12365e" />
      </Svg>
    ),
  },
  {
    name: "Flame",
    state: "open",
    art: (
      <Svg w={24} h={24}>
        <rect width="24" height="24" rx="4" fill="#383838" />
        <path d="M11 3c5 5 1 7 4 9l2-3c3 6-1 12-5 12s-8-4-5-8c2-2 5-5 4-10z" fill="#f6921e" />
        <path d="M12 12c3 4 2 7 0 8-3-1-4-3 0-8z" fill="#fddc6c" />
      </Svg>
    ),
  },
  {
    name: "Discord",
    state: "open",
    art: (
      <Svg w={18} h={21}>
        <path d="M2 0h14q2 0 2 2v19l-3-3H2q-2 0-2-2V2q0-2 2-2z" fill="#6f84d0" />
        <g transform="translate(3 3)">
          <FaDiscord size={12} color="#fff" />
        </g>
      </Svg>
    ),
  },
  { name: "Battle.net game", state: "open", art: <BattleNet /> },
  {
    name: "Cloud",
    state: "open",
    art: (
      <Svg w={24} h={24}>
        <circle cx="12" cy="12" r="11" fill="#031a05" stroke="#10e020" strokeWidth="1.500" />
        <path d="M4 17c-2-3 1-6 3-5 0-6 7-8 9-3 3 0 6 4 4 8z" fill="#0f0" />
      </Svg>
    ),
  },
  {
    name: "Illustrator",
    state: "active",
    art: (
      <span className="flex h-[22px] w-[22px] items-center justify-center border-2 border-[#d47c18] bg-[#2b1200] text-xs font-semibold text-[#f0922a]">
        Ai
      </span>
    ),
  },
];

function Taskbar() {
  return (
    <footer className="flex h-10 shrink-0 bg-[#0b1316] font-['Open_Sans',sans-serif] text-white">
      {tasks.map((t) => (
        <button
          key={t.name}
          aria-label={t.name}
          className={clsx(
            "relative flex w-[49px] items-center justify-center",
            t.state === "active" && "bg-[#3d4648]"
          )}
        >
          {t.state === "steam" && (
            <span className="absolute inset-y-0 left-1 flex w-10 border-b-2 border-[#4be04b]">
              <span className="w-[33px] bg-[#2f6f33]" />
              <span className="flex-1 bg-[#26343a]" />
            </span>
          )}
          <span className="relative">{t.art}</span>
          {t.state === "open" && <span className="absolute bottom-0 left-1 h-[2px] w-10 bg-[#fbdcb4]" />}
          {t.state === "active" && <span className="absolute inset-x-0 bottom-0 h-[2px] bg-[#fbdcb4]" />}
        </button>
      ))}
      <div className="flex-1" />
      <div className="flex items-center gap-2">
        <Svg w={12} h={8}>
          <path d="M.5 7L6 1.500 11.500 7" stroke="#fff" strokeWidth="1.300" />
        </Svg>
        <span className="relative ml-1">
          <FaDropbox size={14} />
          <Svg w={8} h={8} className="absolute right-0 -bottom-[2px]">
            <circle cx="4" cy="4" r="4" fill="#3fae49" />
            <path d="M2 4l1.500 1.500L6 2.500" stroke="#fff" />
          </Svg>
        </span>
        <Svg w={17} h={14}>
          <path d="M5 2.500h11v8H5M10.500 10.500v3M7 13.500h7M.5.500h4v4h-4zM2.500 4.500v7H7" stroke="#fff" />
        </Svg>
        <Svg w={17} h={14}>
          <path d="M.5 5v4h2.500l3.500 3.500v-11L3 5z" stroke="#fff" />
          <path d="M8.500 5q1.500 2 0 4M11 3q3 4 0 8M13.500 1q4.500 6 0 12" stroke="#fff" />
        </Svg>
      </div>
      <div className="ml-2 flex flex-col items-center pt-[2px] text-[11px] leading-[18px]">
        <span>22.00</span>
        <span>27.9.2016</span>
      </div>
      <button aria-label="Notifications" className="mx-[17px]">
        <Svg w={17} h={17}>
          <path d="M.6.600h15.800v12.500h-5.400L8.500 16 6 13.100H.6z" stroke="#fff" strokeWidth="1.200" />
        </Svg>
      </button>
      <span className="mr-1 ml-[2px] w-px bg-[#50585a]" />
    </footer>
  );
}

export default function App() {
  return (
    <div className="relative flex h-screen flex-col overflow-hidden font-[Roboto,sans-serif]">
      <main className="relative flex min-h-0 flex-1 p-3">
        <BrowserBackdrop />
        <div className="relative flex min-w-0 flex-1 flex-col rounded-t border border-[#161616] bg-[#474747]">
          <MenuBar />
          <div className="flex min-h-0 flex-1 flex-col px-1 pb-1">
            <ControlBar />
            <div className="flex min-h-0 flex-1 gap-[3px] bg-[#3d3d3d] ring-1 ring-[#222]">
              <Toolbox />
              <DocumentArea />
              <Dock />
              <Libraries />
            </div>
          </div>
        </div>
        <PreferencesDialog />
      </main>
      <Taskbar />
    </div>
  );
}
